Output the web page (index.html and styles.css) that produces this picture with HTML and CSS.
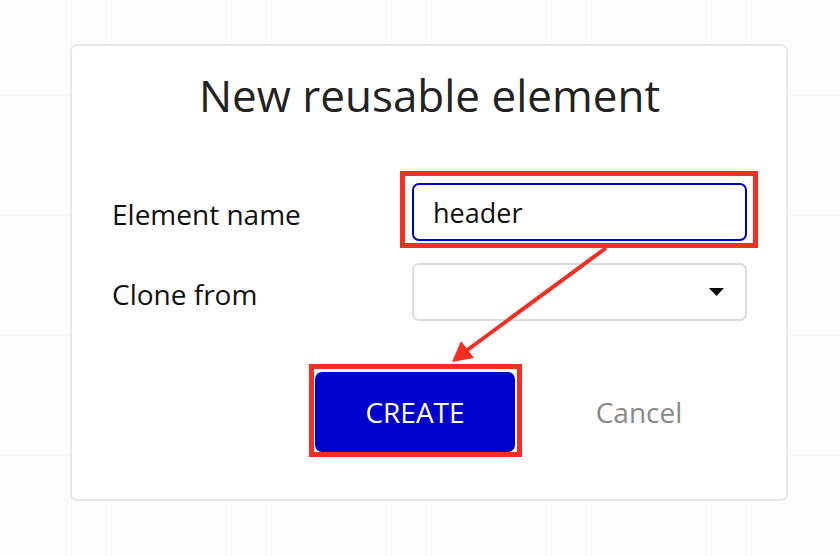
FILE: index.html
```html
<!DOCTYPE html>
<html lang="en">
<head>
  <meta charset="UTF-8">
  <meta name="viewport" content="width=device-width, initial-scale=1.0">
  <title>New reusable element</title>
  <link rel="stylesheet" href="styles.css">
</head>
<body>
  <div class="dialog">
    <h1>New reusable element</h1>
    <div class="form">
      <label for="elName">Element name</label>
      <span class="mark mark-input">
        <input type="text" id="elName" value="header">
      </span>
      <label>Clone from</label>
      <div class="select">
        <span class="value"></span>
        <svg class="caret" width="15" height="8" viewBox="0 0 15 8"><path d="M0 0 H15 L7.5 8 Z" fill="#000"/></svg>
      </div>
    </div>
    <div class="actions">
      <span class="mark mark-btn">
        <button class="create">CREATE</button>
      </span>
      <button class="cancel">Cancel</button>
    </div>
  </div>

  <svg class="arrow" width="840" height="556" viewBox="0 0 840 556">
    <line x1="606" y1="248" x2="466" y2="351" stroke="#f22f22" stroke-width="4"/>
    <path d="M452 362 L461 341 L474 358 Z" fill="#f22f22"/>
  </svg>
</body>
</html>
```

FILE: styles.css
```css
* { box-sizing: border-box; }
body {
  margin: 0;
  font-family: 'Open Sans', sans-serif;
  background-color: #fcfcfc;
  background-image:
    repeating-linear-gradient(90deg, transparent 0 71px, #f5f5f5 71px 72px, transparent 72px 111px, #f5f5f5 111px 112px, transparent 112px 160px),
    repeating-linear-gradient(180deg, transparent 0 95px, #f6f6f6 95px 96px, transparent 96px 120px);
  height: 556px;
  overflow: hidden;
  position: relative;
}
.dialog {
  margin: 44px 0 0 70px;
  width: 718px;
  background: #fff;
  border: 2px solid #e8e8e8;
  border-radius: 7px;
  padding: 21px 39px 47px 40px;
}
h1 {
  margin: 0;
  font-size: 44px;
  font-weight: 400;
  line-height: 56px;
  color: #222;
  text-align: center;
}
.form {
  margin-top: 60px;
  display: grid;
  grid-template-columns: 300px 335px;
  row-gap: 22px;
  align-items: center;
}
.form label {
  font-size: 28px;
  color: #111;
  padding-top: 3px;
}
.mark {
  position: relative;
  display: block;
}
.mark::after {
  content: '';
  position: absolute;
  border: 5px solid #f22f22;
  pointer-events: none;
}
.mark-input::after { top: -12px; left: -12px; right: -11px; bottom: -7px; }
.mark-btn::after { top: -8px; left: -6px; right: -7px; bottom: -5px; }
.form input {
  display: block;
  width: 335px;
  height: 58px;
  border: 2px solid #0000cc;
  border-radius: 7px;
  padding: 0 19px;
  font-family: 'Open Sans', sans-serif;
  font-size: 27px;
  color: #111;
  outline: none;
}
.select {
  height: 58px;
  border: 2px solid #dcdcdc;
  border-radius: 7px;
  display: flex;
  align-items: center;
  justify-content: space-between;
  padding: 0 21px 0 19px;
}
.caret { display: block; }
.actions {
  margin-top: 51px;
  display: flex;
  align-items: center;
  gap: 24px;
  padding-left: 203px;
}
.actions button {
  width: 200px;
  height: 80px;
  border: none;
  border-radius: 7px;
  font-family: 'Open Sans', sans-serif;
  font-size: 28px;
  cursor: pointer;
}
.create {
  display: block;
  background: #0000cc;
  color: #fff;
}
.cancel {
  background: transparent;
  color: #888;
}
.arrow {
  position: absolute;
  top: 0;
  left: 0;
  pointer-events: none;
}
```
